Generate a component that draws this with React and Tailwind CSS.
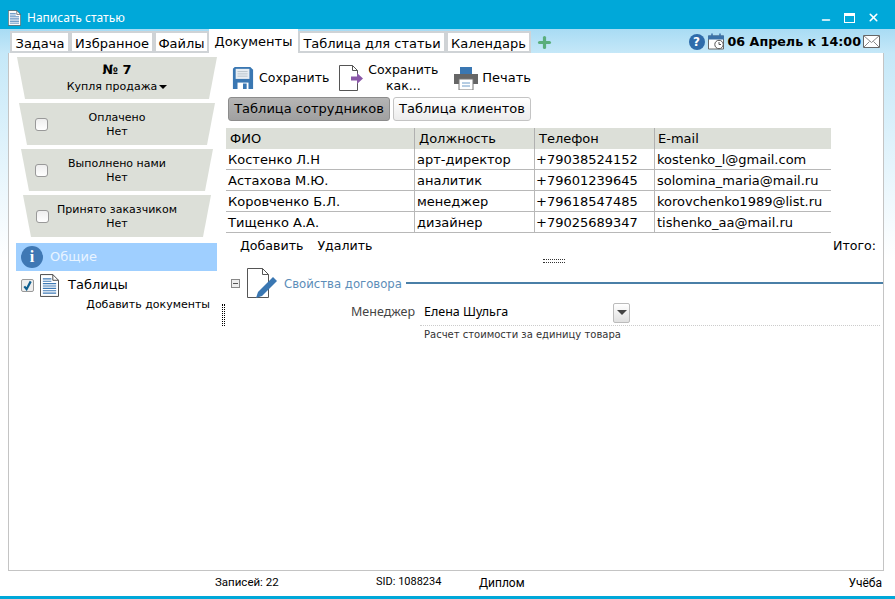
import React from "react";
import { Minus, X, Plus } from "lucide-react";

const font = "font-['DejaVu_Sans',Verdana,sans-serif]";

const tabs = [
  { name: "Задача", w: "w-[60px]" },
  { name: "Избранное", w: "w-[84px]" },
  { name: "Файлы", w: "w-[55px]" },
  { name: "Документы", w: "w-[89px]", active: true },
  { name: "Таблица для статьи", w: "w-[148px]" },
  { name: "Календарь", w: "w-[85px]" },
];

const rows = [
  ["Костенко Л.Н", "арт-директор", "+79038524152", "kostenko_l@gmail.com"],
  ["Астахова М.Ю.", "аналитик", "+79601239645", "solomina_maria@mail.ru"],
  ["Коровченко Б.Л.", "менеджер", "+79618547485", "korovchenko1989@list.ru"],
  ["Тищенко А.А.", "дизайнер", "+79025689347", "tishenko_aa@mail.ru"],
];

function DocIcon({ className }) {
  return (
    <svg viewBox="0 0 20 24" className={className}>
      <path d="M.5.5h13l6 6v17H.5z" fill="#fff" stroke="#444" />
      <path d="M13.5.5v6h6" fill="none" stroke="#444" />
      <path d="M3 5h9M3 7.5h9M3 10h14M3 12.5h14M3 15h14M3 17.5h14M3 20h14" stroke="#3f7ab5" strokeWidth="1.2" />
    </svg>
  );
}

function Check({ className }) {
  return <span className={`block w-[13px] h-[13px] rounded-[3px] border border-[#999] bg-gradient-to-b from-[#eee] to-white ${className}`} />;
}

function Status({ title, width, cbLeft }) {
  return (
    <div className={`relative h-[42px] ${width} mt-[4px] mx-auto pt-[2px] bg-[#dcdfd8] [clip-path:polygon(0_0,100%_0,calc(100%-8px)_100%,8px_100%)] text-[11px] leading-[14px] text-center text-black flex flex-col justify-center`}>
      <Check className={`absolute top-[15px] ${cbLeft}`} />
      <div>{title}</div>
      <div>Нет</div>
    </div>
  );
}

function ToolBtn({ children, label }) {
  return (
    <div className="flex items-center text-[12.5px] leading-[16px] text-black text-center">
      {children}
      <span>{label}</span>
    </div>
  );
}

export default function App() {
  return (
    <div className={`w-[895px] h-[599px] flex flex-col overflow-hidden bg-white ${font}`}>
      <div className="h-[29px] shrink-0 bg-[#00a8d9] flex items-center pt-[6px] pl-[8px] pr-[15px]">
        <DocIcon className="w-[13px] h-[16px]" />
        <span className="ml-[6px] text-[12px] text-white font-['Noto_Sans',sans-serif]">Написать статью</span>
        <div className="ml-auto flex items-center gap-[12px] text-white">
          <Minus size={12} strokeWidth={3} className="mt-[5px]" />
          <span className="block w-[11px] h-[10px] border border-white border-t-[3px]" />
          <X size={13} strokeWidth={3} />
        </div>
      </div>

      <div className="h-[24px] shrink-0 flex items-end pl-[10px] pr-[11px] bg-gradient-to-b from-[#a8dcf4] to-[#c5e8f8]">
        {tabs.map((t) => (
          <div
            key={t.name}
            className={`${t.w} shrink-0 text-center text-[13px] text-black bg-white ${
              t.active ? "h-[24px] leading-[25px]" : "h-[22px] leading-[21px] border-2 border-[#cfd3d6]"
            }`}
          >
            {t.name}
          </div>
        ))}
        <Plus size={17} strokeWidth={4.5} className="ml-[5px] mb-[2px] text-[#5aae7c]" />
        <div className="ml-auto flex items-center h-full pt-[1px] text-[12.7px] font-bold text-black">
          <span className="w-[16px] h-[16px] rounded-full bg-[#2e6cab] text-white text-[12px] leading-[16px] text-center">?</span>
          <svg viewBox="0 0 16 16" className="w-[16px] h-[17px] ml-[3px]">
            <path d="M.5 2.500h15v13H.5z" fill="#fff" stroke="#666" />
            <path d="M0 2h16v4H0z" fill="#3b72a8" />
            <path d="M4 0v3M12 0v3" stroke="#3b72a8" strokeWidth="1.5" />
            <circle cx="11" cy="11" r="4.2" fill="#fff" stroke="#555" />
            <path d="M11 8.500V11h2" fill="none" stroke="#555" />
          </svg>
          <span className="ml-[4px]">06 Апрель к 14:00</span>
          <svg viewBox="0 0 17 13" className="w-[17px] h-[13px] ml-[2px] mr-[4px]">
            <path d="M.5.5h16v12H.5z" fill="#fff" stroke="#666" />
            <path d="M.5.5l8 7 8-7M.5 12.500l6-6M16.500 12.500l-6-6" fill="none" stroke="#888" />
          </svg>
        </div>
      </div>

      <div className="flex-1 min-h-0 pl-[8px] pr-[11px] bg-gradient-to-b from-[#c5e8f8] to-white to-40%">
        <div className="h-full bg-white border border-[#c4c4c4] border-t-0 flex">
          <aside className="w-[209px] shrink-0 pl-[7px] pt-[4px] relative">
            <div className="relative w-[200px] h-[42px] mx-auto bg-[#dcdfd8] [clip-path:polygon(0_0,100%_0,calc(100%-8px)_100%,8px_100%)] text-center text-black">
              <div className="text-[13px] font-bold leading-[16px] pt-[5px]">№ 7</div>
              <div className="text-[11px] leading-[14px] mt-[2px]">
                Купля продажа<span className="inline-block align-middle ml-[2px] border-x-[4px] border-x-transparent border-t-[4px] border-t-black" />
              </div>
            </div>
            <Status title="Оплачено" width="w-[196px]" cbLeft="left-[16px]" />
            <Status title="Выполнено нами" width="w-[192px]" cbLeft="left-[14px]" />
            <Status title="Принято заказчиком" width="w-[188px]" cbLeft="left-[13px]" />
            <div className="mt-[6px] h-[28px] w-[201px] bg-[#9fcfff] flex items-center pl-[5px] text-[13px] text-[#e9f4ff]">
              <span className="w-[22px] h-[22px] rounded-full bg-[#3f78b4] text-white font-bold text-[16px] leading-[22px] text-center font-['Liberation_Serif',serif]">i</span>
              <span className="ml-[7px]">Общие</span>
            </div>
            <div className="flex items-center h-[24px] mt-[2px] pl-[5px] text-[13px] text-black">
              <span className="w-[13px] h-[13px] rounded-[2px] border border-[#999] bg-[#eee] flex items-center justify-center">
                <svg viewBox="0 0 12 12" className="w-[11px] h-[11px]"><path d="M2.500 7l2.500 3L9.500 1.500" fill="none" stroke="#0f5f8f" strokeWidth="2.4" /></svg>
              </span>
              <DocIcon className="w-[19px] h-[23px] ml-[6px]" />
              <span className="ml-[9px]">Таблицы</span>
            </div>
            <div className="text-[11px] text-right pr-[8px] mt-[1px] leading-[14px] text-black">Добавить документы</div>
            <span className="absolute right-[-7px] top-[251px] w-[3px] h-[22px] border-x border-dotted border-black" />
          </aside>

          <main className="flex-1 min-w-0 pl-[8px] pt-[9px] relative">
            <div className="flex items-center h-[32px] pl-[6px]">
              <ToolBtn label="Сохранить">
                <svg viewBox="0 0 22 24" className="w-[22px] h-[22px] mr-[5px]">
                  <path d="M2 0h17l3 3v21H0V2z" fill="#3a77b2" />
                  <path d="M3 2h15v11H3z" fill="#e8eef3" />
                  <path d="M5 5h11M5 7.500h11M5 10h11" stroke="#b5bfc8" />
                  <path d="M5 17h12v7H5z" fill="#fff" />
                  <path d="M11 18h4v6h-4z" fill="#3a77b2" />
                </svg>
              </ToolBtn>
              <div className="ml-[10px]">
                <ToolBtn label={<span className="block w-[72px] ml-[4px] text-[12.5px]">Сохранить как...</span>}>
                  <svg viewBox="0 0 24 26" className="w-[24px] h-[26px]">
                    <path d="M.5.5h13l5 5v20H.5z" fill="#fff" stroke="#555" />
                    <path d="M13.500.5v5h5" fill="none" stroke="#555" />
                    <path d="M12 11.500h6V8l6 5.500-6 5.500v-3.500h-6z" fill="#8a58a8" />
                  </svg>
                </ToolBtn>
              </div>
              <div className="ml-[15px]">
                <ToolBtn label={<span className="text-[13px]">Печать</span>}>
                  <svg viewBox="0 0 24 24" className="w-[24px] h-[24px] mr-[4px]">
                    <path d="M6 1h12v7H6z" fill="#3a77b2" />
                    <path d="M0 8h24v10H0z" fill="#666" />
                    <path d="M5 13h14v11H5z" fill="#fff" stroke="#777" />
                    <path d="M8 17h8M8 20h8" stroke="#6f9cc8" />
                  </svg>
                </ToolBtn>
              </div>
            </div>

            <div className="flex gap-[3px] mt-[3px] ml-[2px] text-[13px] text-black">
              <div className="h-[24px] w-[162px] rounded-[3px] border border-[#8c8c8c] bg-gradient-to-b from-[#b5b5b5] to-[#a0a0a0] text-center leading-[22px]">Таблица сотрудников</div>
              <div className="h-[24px] w-[138px] rounded-[3px] border border-[#c4c4c4] bg-gradient-to-b from-white to-[#ececec] text-center leading-[22px]">Таблица клиентов</div>
            </div>

            <div className="mt-[7px] w-[605px] text-[13px] text-black">
              <div className="grid grid-cols-[189px_120px_120px_176px] h-[21px] bg-[#dcdfd8] leading-[21px]">
                <div className="pl-[4px] border-r border-[#b0b0b0]">ФИО</div>
                <div className="pl-[4px] border-r border-[#b0b0b0]">Должность</div>
                <div className="pl-[4px] border-r border-[#b0b0b0]">Телефон</div>
                <div className="pl-[3px]">E-mail</div>
              </div>
              {rows.map((r) => (
                <div key={r[0]} className="grid grid-cols-[189px_120px_120px_176px] h-[21px] border-b border-[#b8b8b8] leading-[21px]">
                  <div className="pl-[2px] border-r border-[#b8b8b8]">{r[0]}</div>
                  <div className="pl-[2px] border-r border-[#b8b8b8]">{r[1]}</div>
                  <div className="pl-[1px] border-r border-[#b8b8b8]">{r[2]}</div>
                  <div className="pl-[2px]">{r[3]}</div>
                </div>
              ))}
            </div>

            <div className="flex h-[26px] items-center pl-[14px] pr-[7px] text-[12.6px] text-black">
              <span>Добавить</span>
              <span className="ml-[14px]">Удалить</span>
              <span className="ml-auto">Итого:</span>
            </div>
            <div className="h-[4px] w-[22px] ml-[317px] border-y border-dotted border-[#333]" />

            <div className="flex items-center h-[32px] mt-[4px] pl-[5px]">
              <span className="w-[9px] h-[9px] border border-[#888] flex items-center justify-center bg-[#eee]">
                <span className="block w-[5px] h-[1px] bg-[#555]" />
              </span>
              <svg viewBox="0 0 32 30" className="w-[32px] h-[32px] ml-[7px]">
                <path d="M.5.5h15l6 6v23H.5z" fill="#fff" stroke="#555" />
                <path d="M15.500.5v6h6" fill="none" stroke="#555" />
                <path d="M11 24l15-15 4 4-15 15-6 2z" fill="#3a77b2" />
              </svg>
              <span className="ml-[5px] mt-[3px] text-[11.7px] text-[#5c8db8]">Свойства договора</span>
              <span className="ml-[4px] flex-1 h-[2px] bg-[#4a7fa7]" />
            </div>

            <div className="flex items-center h-[26px] mt-[1px] font-['Noto_Sans',sans-serif]">
              <span className="w-[189px] text-right text-[12.5px] text-[#444] shrink-0 mt-[-2px]">Менеджер</span>
              <div className="flex-1 flex items-center h-[26px] ml-[5px] mr-[3px] border-b border-dotted border-[#ccc] pl-[4px] text-[12.5px] text-black">
                <span>Елена Шульга</span>
                <span className="ml-[105px] w-[17px] h-[20px] rounded-[2px] border border-[#bbb] bg-gradient-to-b from-white to-[#e0e0e0] flex items-center justify-center">
                  <span className="border-x-[5px] border-x-transparent border-t-[5px] border-t-[#444]" />
                </span>
              </div>
            </div>
            <div className="pl-[198px] text-[10px] leading-[18px] text-[#333]">Расчет стоимости за единицу товара</div>
          </main>
        </div>
      </div>

      <div className="h-[25px] shrink-0 relative text-[12px] text-black font-['Roboto',Arial,sans-serif] flex items-center pl-[215px] pr-[13px] pb-[2px]">
        <span className="w-[161px] text-[11.5px]">Записей: 22</span>
        <span className="w-[103px] text-[11px]">SID: 1088234</span>
        <span>Диплом</span>
        <span className="ml-auto">Учёба</span>
      </div>
      <div className="h-[3px] shrink-0 bg-[#00a8d9]" />
    </div>
  );
}
